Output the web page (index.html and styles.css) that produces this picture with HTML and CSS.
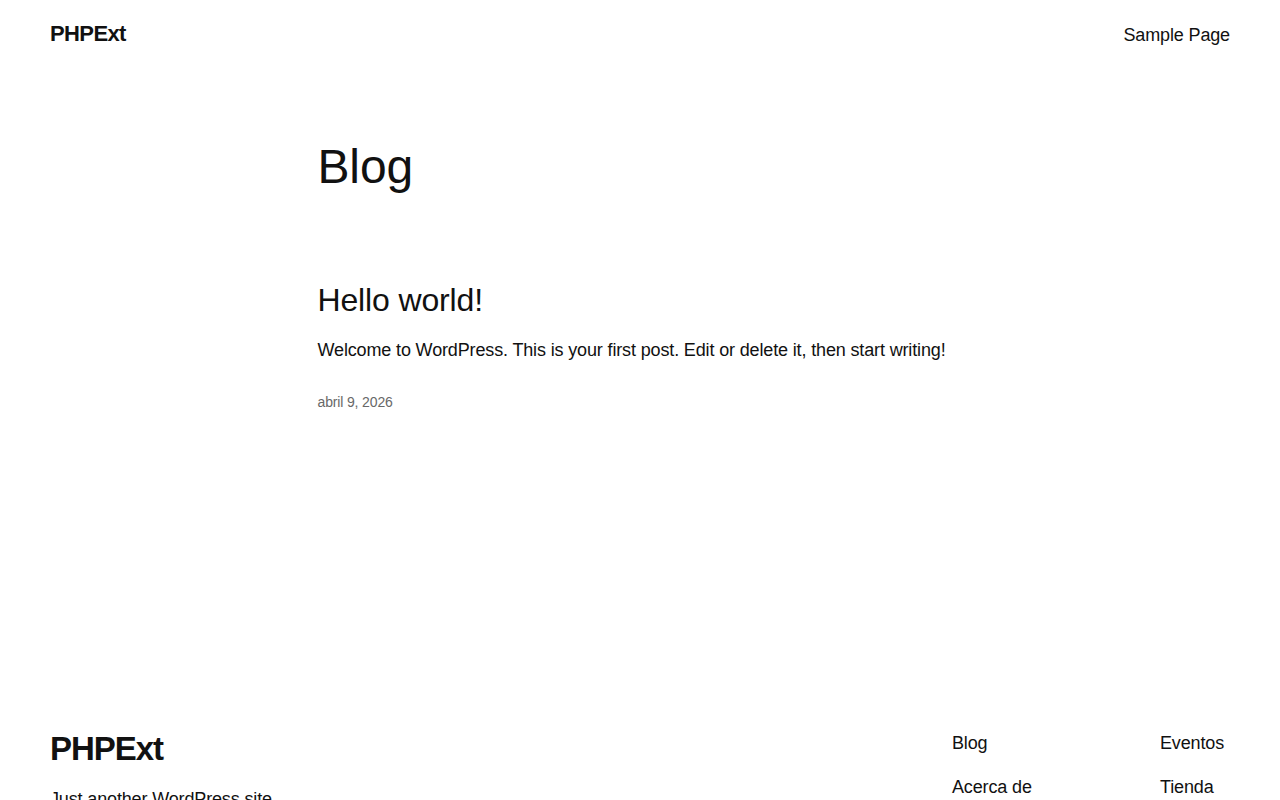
FILE: index.html
```html
<!DOCTYPE html>
<html lang="es">
  <head>
    <meta charset="UTF-8" />
    <meta name="viewport" content="width=device-width, initial-scale=1.0" />
    <title>Blog – PHPExt</title>
    <link rel="stylesheet" href="styles.css">
  </head>
  <body>
    <header class="site-header">
      <a class="site-title" href="#">PHPExt</a>
      <nav class="header-nav">
        <a href="#">Sample Page</a>
      </nav>
    </header>

    <main class="site-main">
      <h1 class="page-title">Blog</h1>

      <article class="post">
        <h2 class="post-title"><a href="#">Hello world!</a></h2>
        <p class="post-excerpt">
          Welcome to WordPress. This is your first post. Edit or delete it, then start writing!
        </p>
        <time class="post-date" datetime="2026-04-09">abril 9, 2026</time>
      </article>
    </main>

    <footer class="site-footer">
      <div class="footer-brand">
        <a class="footer-title" href="#">PHPExt</a>
        <p class="tagline">Just another WordPress site</p>
      </div>
      <nav class="footer-nav">
        <div class="footer-col">
          <a href="#">Blog</a>
          <a href="#">Acerca de</a>
        </div>
        <div class="footer-col">
          <a href="#">Eventos</a>
          <a href="#">Tienda</a>
        </div>
      </nav>
    </footer>
  </body>
</html>
```

FILE: styles.css
```css
* {
  margin: 0;
  padding: 0;
  box-sizing: border-box;
}

body {
  font-family: "Liberation Sans", Arial, sans-serif;
  font-size: 18px;
  line-height: 1.6;
  letter-spacing: -0.008em;
  color: #111111;
  background: #ffffff;
}

a {
  color: inherit;
  text-decoration: none;
}

.site-header {
  display: flex;
  justify-content: space-between;
  align-items: baseline;
  padding: 20px 50px;
}

.site-title {
  font-size: 22px;
  font-weight: 700;
  line-height: 1.3;
  letter-spacing: -0.028em;
}

.header-nav a {
  font-size: 18px;
}

.site-main {
  width: 645px;
  margin: 0 auto;
  padding-top: 70px;
  padding-bottom: 252px;
}

.page-title {
  font-size: 48px;
  font-weight: 400;
  line-height: 1.125;
}

.post {
  margin-top: 87px;
}

.post-title {
  font-size: 32px;
  font-weight: 400;
  line-height: 1.2;
}

.post-excerpt {
  margin-top: 17px;
}

.post-date {
  display: block;
  margin-top: 26px;
  font-size: 14px;
  color: #686868;
}

.site-footer {
  display: flex;
  justify-content: space-between;
  align-items: flex-start;
  padding: 64px 50px 40px;
}

.footer-title {
  display: block;
  font-size: 33px;
  font-weight: 700;
  line-height: 1.2;
  letter-spacing: -0.032em;
}

.tagline {
  margin-top: 16px;
}

.footer-nav {
  display: grid;
  grid-template-columns: 208px 70px;
}

.footer-col {
  display: flex;
  flex-direction: column;
  gap: 14.6px;
}
```
